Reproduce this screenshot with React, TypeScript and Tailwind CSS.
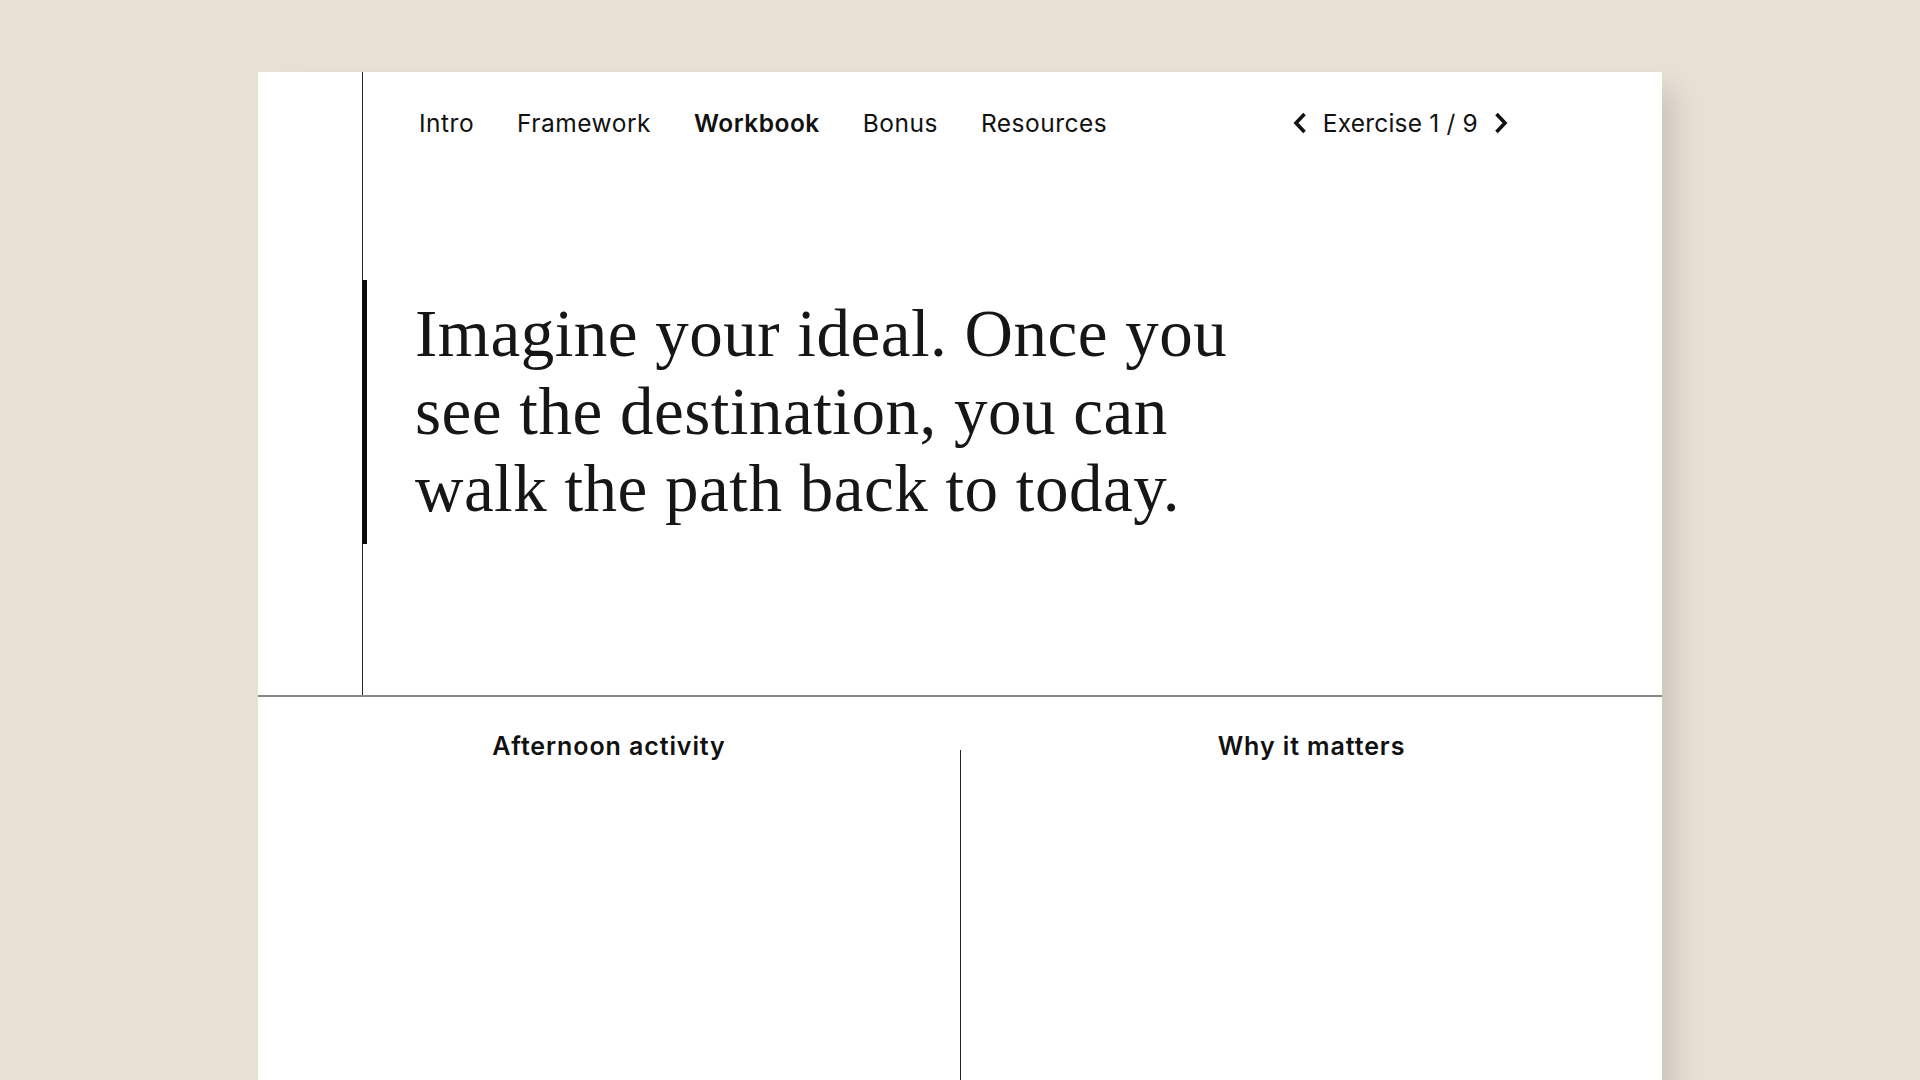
import React from "react";

const sans = "font-['Inter','Liberation_Sans',sans-serif]";

function Chevron({ dir }: { dir: "left" | "right" }) {
  return (
    <svg width="15" height="22" viewBox="0 0 15 22" className="shrink-0">
      {dir === "left" ? (
        <polyline points="12.5,2 4,11 12.5,20" fill="none" stroke="#111" strokeWidth="3.6" strokeLinecap="butt" strokeLinejoin="miter" />
      ) : (
        <polyline points="2.5,2 11,11 2.5,20" fill="none" stroke="#111" strokeWidth="3.6" strokeLinecap="butt" strokeLinejoin="miter" />
      )}
    </svg>
  );
}

export default function App() {
  const nav = ["Intro", "Framework", "Workbook", "Bonus", "Resources"];
  return (
    <div className={`h-screen w-full overflow-hidden bg-[#e7e0d5] pt-[72px] pl-[258px] ${sans}`}>
      <div className="w-[1404px] h-[1100px] bg-white shadow-[18px_12px_26px_-6px_rgba(0,0,0,0.13)] text-[#111]">
        {/* Top section */}
        <div className="flex h-[625px] border-b-2 border-[#878787]">
          <div className="w-[105px] shrink-0 border-r border-[#2a2a2a]" />
          <div className="flex-1 flex flex-col">
            <div className="flex items-center justify-between pt-[37px] pl-[56px] pr-[153px]">
              <nav className="flex items-center gap-[43px] text-[24.5px] leading-[28px] tracking-[0.5px]">
                {nav.map((n) => (
                  <span key={n} className={n === "Workbook" ? "font-semibold" : "font-normal"}>
                    {n}
                  </span>
                ))}
              </nav>
              <div className="flex items-center gap-[16px] text-[24.5px] leading-[28px] tracking-[0.2px]">
                <Chevron dir="left" />
                <span>Exercise 1 / 9</span>
                <Chevron dir="right" />
              </div>
            </div>
            <div className="mt-[143px] -ml-px border-l-[5px] border-[#0a0a0a] pt-[15px] pb-[16px] pl-[48px]">
              <h1 className="w-[880px] font-['Liberation_Serif','Times_New_Roman',serif] text-[67px] leading-[77.5px] font-normal tracking-[0.5px] text-[#161616]">
                Imagine your ideal. Once you see the destination, you can walk the path back to today.
              </h1>
            </div>
          </div>
        </div>
        {/* Bottom section */}
        <div className="grid grid-cols-[702px_1px_701px] pt-[33px] h-[480px]">
          <h2 className="text-center text-[25px] leading-[33px] font-semibold tracking-[0.9px]">Afternoon activity</h2>
          <div className="mt-[20px] bg-[#222]" />
          <h2 className="text-center text-[25px] leading-[33px] font-semibold tracking-[0.9px]">Why it matters</h2>
        </div>
      </div>
    </div>
  );
}
